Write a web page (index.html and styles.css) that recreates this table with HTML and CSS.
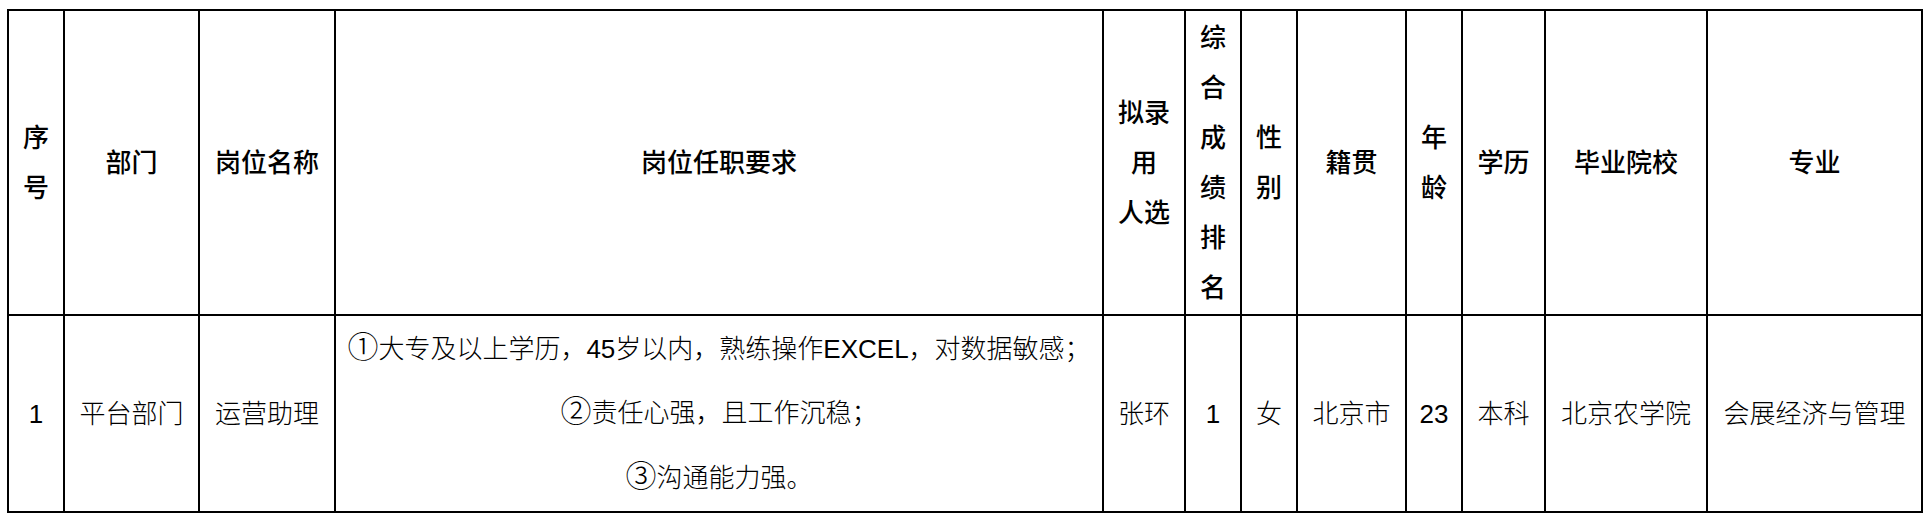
FILE: index.html
```html
<!DOCTYPE html>
<html lang="zh-CN">
<head>
<meta charset="utf-8">
<title>拟录用人员公示</title>
<link rel="stylesheet" href="styles.css">
</head>
<body>
<table class="grid">
  <tr class="head">
    <th class="c-no">序<br>号</th>
    <th class="c-dept">部门</th>
    <th class="c-post">岗位名称</th>
    <th class="c-req">岗位任职要求</th>
    <th class="c-name">拟录<br>用<br>人选</th>
    <th class="c-rank">综<br>合<br>成<br>绩<br>排<br>名</th>
    <th class="c-sex">性<br>别</th>
    <th class="c-home">籍贯</th>
    <th class="c-age">年<br>龄</th>
    <th class="c-edu">学历</th>
    <th class="c-school">毕业院校</th>
    <th class="c-major">专业</th>
  </tr>
  <tr class="data">
    <td>1</td>
    <td>平台部门</td>
    <td>运营助理</td>
    <td class="req">
      <div class="req-line"><span class="circ">①</span>大专及以上学历，45岁以内，熟练操作EXCEL，对数据敏感；</div>
      <div class="req-line"><span class="circ">②</span>责任心强，且工作沉稳；</div>
      <div class="req-line"><span class="circ">③</span>沟通能力强。</div>
    </td>
    <td>张环</td>
    <td>1</td>
    <td>女</td>
    <td>北京市</td>
    <td>23</td>
    <td>本科</td>
    <td>北京农学院</td>
    <td>会展经济与管理</td>
  </tr>
</table>
</body>
</html>
```

FILE: styles.css
```css
html, body {
  background: #ffffff;
}
body {
  margin: 9px 0 0 7px;
  color: #000000;
  font-family: "Liberation Sans", "Noto Sans CJK SC", sans-serif;
}
.grid {
  table-layout: fixed;
  width: 1916px;
  border-collapse: separate;
  border-spacing: 0;
  border-left: 2px solid #000;
  border-top: 2px solid #000;
}
.grid th,
.grid td {
  box-sizing: border-box;
  border-right: 2px solid #000;
  border-bottom: 2px solid #000;
  padding: 0;
  text-align: center;
  vertical-align: middle;
  font-size: 26px;
  white-space: nowrap;
}
.grid th {
  height: 305px;
  line-height: 50px;
  font-weight: 500;
}
.grid td {
  height: 197px;
  line-height: 64px;
  font-weight: 300;
}
.req-line {
  line-height: 64.5px;
  height: 64.5px;
}
.circ {
  font-family: "Noto Sans CJK SC", sans-serif;
  font-size: 31px;
  line-height: 1;
}
.c-no { width: 56px; }
.c-dept { width: 135px; }
.c-post { width: 136px; }
.c-req { width: 768px; }
.c-name { width: 82px; }
.c-rank { width: 56px; }
.c-sex { width: 56px; }
.c-home { width: 109px; }
.c-age { width: 56px; }
.c-edu { width: 83px; }
.c-school { width: 162px; }
.c-major { width: 215px; }
```
